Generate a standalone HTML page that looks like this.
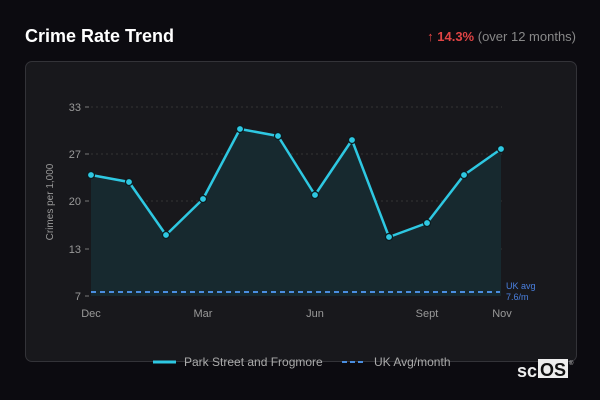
<!DOCTYPE html>
<html><head><style>
body{margin:0;width:600px;height:400px;background:#0c0b10;font-family:"Liberation Sans","DejaVu Sans",sans-serif;overflow:hidden;position:relative}
.t{position:absolute;left:25px;top:26px;color:#fff;font-weight:bold;font-size:18px}
.r{position:absolute;right:24px;top:29px;font-size:13px;color:#888}
.r b{color:#e04444}
.card{position:absolute;left:25px;top:61px;width:550px;height:299px;border:1px solid #333338;border-radius:7px;background:#18181c}
svg{position:absolute;left:0;top:0}
</style></head><body>
<div class="t">Crime Rate Trend</div>
<div class="r"><b>↑ 14.3%</b> (over 12 months)</div>
<div class="card"></div>
<svg width="600" height="400" font-family="Liberation Sans, DejaVu Sans, sans-serif">
<g stroke="#333" stroke-dasharray="2 3" stroke-width="1">
<line x1="91" y1="107" x2="502" y2="107"/><line x1="91" y1="154" x2="502" y2="154"/><line x1="91" y1="201" x2="502" y2="201"/><line x1="91" y1="249" x2="502" y2="249"/>
</g>
<g stroke="#777"><line x1="85" y1="107" x2="89" y2="107"/><line x1="85" y1="154" x2="89" y2="154"/><line x1="85" y1="201" x2="89" y2="201"/><line x1="85" y1="249" x2="89" y2="249"/><line x1="85" y1="296" x2="89" y2="296"/></g>
<g fill="#999" font-size="11" text-anchor="end"><text x="81" y="111">33</text><text x="81" y="158">27</text><text x="81" y="205">20</text><text x="81" y="253">13</text><text x="81" y="300">7</text></g>
<text transform="translate(53,202) rotate(-90)" fill="#999" font-size="10" text-anchor="middle">Crimes per 1,000</text>
<g fill="#999" font-size="11" text-anchor="middle"><text x="91" y="317">Dec</text><text x="203" y="317">Mar</text><text x="315" y="317">Jun</text><text x="427" y="317">Sept</text><text x="502" y="317">Nov</text></g>
<path d="M91,175 L129,182 L166,235 L203,199 L240,129 L278,136 L315,195 L352,140 L389,237 L427,223 L464,175 L501,149 L501,296 L91,296Z" fill="#17292f"/>
<line x1="91" y1="292" x2="500" y2="292" stroke="#4a8ee0" stroke-width="2" stroke-dasharray="5 4"/>
<text x="506" y="289" fill="#4a80e0" font-size="9">UK avg</text><text x="506" y="300" fill="#4a80e0" font-size="9">7.6/m</text>
<polyline points="91,175 129,182 166,235 203,199 240,129 278,136 315,195 352,140 389,237 427,223 464,175 501,149" fill="none" stroke="#2ec8e2" stroke-width="2.5" stroke-linejoin="round"/>
<g fill="#2ec8e2" stroke="#0c1a1e" stroke-width="1.2">
<circle cx="91" cy="175" r="3.5"/><circle cx="129" cy="182" r="3.5"/><circle cx="166" cy="235" r="3.5"/><circle cx="203" cy="199" r="3.5"/><circle cx="240" cy="129" r="3.5"/><circle cx="278" cy="136" r="3.5"/><circle cx="315" cy="195" r="3.5"/><circle cx="352" cy="140" r="3.5"/><circle cx="389" cy="237" r="3.5"/><circle cx="427" cy="223" r="3.5"/><circle cx="464" cy="175" r="3.5"/><circle cx="501" cy="149" r="3.5"/>
</g>
<line x1="153" y1="362" x2="176" y2="362" stroke="#2ec8e2" stroke-width="3"/>
<text x="184" y="366" fill="#aaa" font-size="12">Park Street and Frogmore</text>
<line x1="342" y1="362" x2="366" y2="362" stroke="#4a8ee0" stroke-width="2" stroke-dasharray="5 3"/>
<text x="374" y="366" fill="#aaa" font-size="12">UK Avg/month</text>
<text x="517" y="377" fill="#eee" font-size="18" font-weight="bold">sc</text>
<rect x="538" y="359" width="30" height="19" fill="#eee"/>
<text x="540" y="376" fill="#111" font-size="18" font-weight="bold">OS</text>
<text x="569" y="365" fill="#ccc" font-size="6">®</text>
</svg>
</body></html>
